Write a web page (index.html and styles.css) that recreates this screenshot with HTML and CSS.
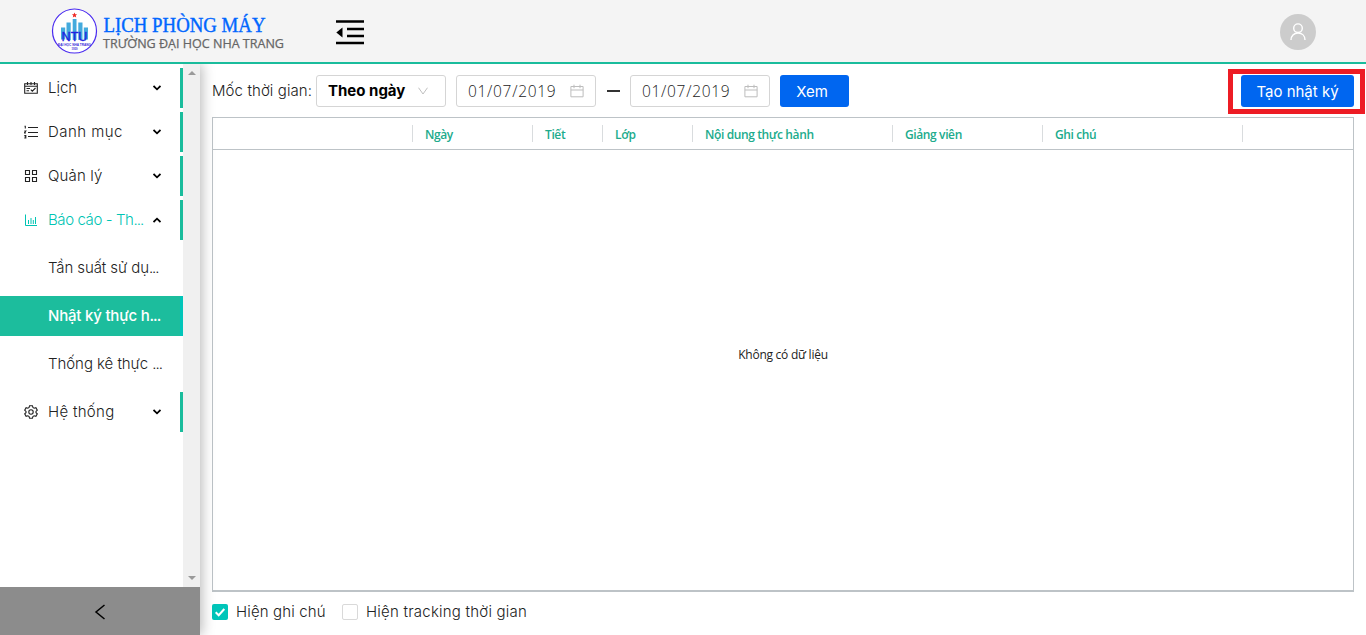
FILE: index.html
```html
<!DOCTYPE html>
<html lang="vi">
<head>
<meta charset="utf-8">
<title>Lịch phòng máy</title>
<link rel="stylesheet" href="styles.css">
</head>
<body>
<header class="header">
  <svg class="logo" width="240" height="52" viewBox="0 0 240 52">
    <circle cx="24.500" cy="25" r="22" fill="#fff" stroke="#4a2bf0" stroke-width="1.200"/>
    <path d="M24.500 6.500l.8 1.700 1.800.1-1.400 1.200.5 1.900-1.700-1-1.700 1 .5-1.900-1.400-1.200 1.800-.1z" fill="#ee2a24"/>
    <path d="M11 21.500h4.200v12H11zM16.500 16.500h4.200V34h-4.200zM22.700 13h3.800v21h-3.800zM28.300 16.500h4.200V34h-4.200zM33.800 21.500H38v12h-4.200z" fill="#43aadd"/>
    <text x="11.500" y="34.500" class="logo-ntu" textLength="26" lengthAdjust="spacingAndGlyphs">NTU</text>
    <text x="8" y="39.500" class="logo-tiny" textLength="33" lengthAdjust="spacingAndGlyphs">ĐẠI HỌC NHA TRANG</text>
    <text x="21.500" y="44.300" class="logo-tiny" textLength="6" lengthAdjust="spacingAndGlyphs">1959</text>
    <text x="53.500" y="25.500" class="logo-title" textLength="162" lengthAdjust="spacingAndGlyphs">LỊCH PHÒNG MÁY</text>
    <text x="53" y="41.500" class="logo-sub" textLength="181" lengthAdjust="spacingAndGlyphs">TRƯỜNG ĐẠI HỌC NHA TRANG</text>
  </svg>
  <svg class="fold" width="28" height="25" viewBox="0 0 28 25"><path d="M0 1.500h28M11 9h17M11 16h17M0 23h28" stroke="#000" stroke-width="2.400"/><path d="M6.500 7.500v10L.3 12.500z"/></svg>
  <span class="avatar"><svg width="18" height="18" viewBox="0 0 18 18" fill="none" stroke="#fff" stroke-width="1.400"><circle cx="9" cy="5.200" r="4.300"/><path d="M2 17c0-4.200 2.900-7 7-7s7 2.800 7 7"/></svg></span>
</header>
<div class="body">
  <aside class="sider">
    <div class="scroll">
      <nav class="menu">
        <div class="item"><svg class="icon" viewBox="0 0 14 14"><path d="M.7 2.700h12.600v9.600H.7zM.7 5.300h12.600M3.500 1v3M7 1v3M10.500 1v3M2.500 7.500H6M2.500 9.800H5M6.800 8.700l1.500 1.500L11.500 7"/></svg><span>Lịch</span><svg class="caret" viewBox="0 0 8 6"><path d="M.5 1L4 4.300 7.500 1"/></svg></div>
        <div class="item"><svg class="icon" viewBox="0 0 14 14"><path d="M4 2.500h10M4 7.500h10M4 11.500h10M.5 1.200h.8v2.300M.3 6h1.500L.3 8h1.600M.3 10.500h1.500v2.500H.3M.6 11.700h1"/></svg><span class="t-danh">Danh mục</span><svg class="caret" viewBox="0 0 8 6"><path d="M.5 1L4 4.300 7.500 1"/></svg></div>
        <div class="item"><svg class="icon" viewBox="0 0 14 14"><path d="M1.500 1.500h4v4h-4zM8.500 1.500h4v4h-4zM1.500 8.500h4v4h-4zM8.500 8.500h4v4h-4z"/></svg><span class="t-quan">Quản lý</span><svg class="caret" viewBox="0 0 8 6"><path d="M.5 1L4 4.300 7.500 1"/></svg></div>
        <div class="item open"><svg class="icon" viewBox="0 0 14 14"><path d="M1.500 1.500v11H13M4.500 7v4M7 5v6M9.300 7v4M11.500 4v7"/></svg><span class="t-bao">Báo cáo - Th<span class="dots">...</span></span><svg class="caret" viewBox="0 0 8 6"><path d="M.5 5L4 1.700 7.500 5"/></svg></div>
        <div class="submenu">
          <div class="sub"><span class="t-tan">Tần suất sử dụ<span class="dots">...</span></span></div>
          <div class="sub active"><span class="t-nhat">Nhật ký thực h<span class="dots">...</span></span></div>
          <div class="sub"><span class="t-thong">Thống kê thực <span class="dots">...</span></span></div>
        </div>
        <div class="item"><svg class="icon" viewBox="0 0 14 14"><circle cx="7" cy="7" r="2.200"/><path d="M5.600.7h2.800l.5 1.800 1.200.7 1.800-.5 1.400 2.400L12 6.400v1.300l1.300 1.200-1.400 2.400-1.800-.5-1.200.7-.5 1.800H5.600l-.5-1.800-1.200-.7-1.800.5L.7 8.900 2 7.700V6.400L.7 5.100l1.400-2.400 1.800.5 1.200-.7z"/></svg><span class="t-he">Hệ thống</span><svg class="caret" viewBox="0 0 8 6"><path d="M.5 1L4 4.300 7.500 1"/></svg></div>
      </nav>
      <div class="scrollbar"><i class="up"></i><i class="down"></i></div>
    </div>
    <div class="trigger"><svg width="12" height="16" viewBox="0 0 12 16"><path d="M10.500 1L2 8l8.500 7" fill="none" stroke="#000" stroke-width="1.500"/></svg></div>
  </aside>
  <main class="main">
    <div class="toolbar">
      <span class="label">Mốc thời gian:</span>
      <div class="box select"><b>Theo ngày</b><svg width="10" height="8" viewBox="0 0 10 8"><path d="M.5.700L5 7 9.500.700" fill="none" stroke="#bfbfbf"/></svg></div>
      <div class="box date"><span>01/07/2019</span><svg class="cal" viewBox="0 0 14 14"><path d="M.9 2.500h12.200v10.300H.9zM.9 6h12.200M4 .7v3.500M10 .7v3.500"/></svg></div>
      <i class="dash"></i>
      <div class="box date"><span>01/07/2019</span><svg class="cal" viewBox="0 0 14 14"><path d="M.9 2.500h12.200v10.300H.9zM.9 6h12.200M4 .7v3.500M10 .7v3.500"/></svg></div>
      <button class="btn xem">Xem</button>
      <div class="highlight"><button class="btn create">Tạo nhật ký</button></div>
    </div>
    <section class="grid">
      <div class="head">
        <span></span><span>Ngày</span><span>Tiết</span><span>Lớp</span><span>Nội dung thực hành</span><span>Giảng viên</span><span>Ghi chú</span><span></span>
      </div>
      <div class="empty">Không có dữ liệu</div>
    </section>
    <div class="options">
      <i class="check on"><svg width="16" height="16" viewBox="0 0 16 16"><path d="M3.700 8.200l3 3L12.300 5" fill="none" stroke="#fff" stroke-width="2"/></svg></i><span class="opt-note">Hiện ghi chú</span>
      <i class="check"></i><span class="opt-track">Hiện tracking thời gian</span>
    </div>
  </main>
</div>
</body>
</html>
```
FILE: styles.css
```css
* { box-sizing: border-box; }
body { margin: 0; height: 635px; overflow: hidden; display: flex; flex-direction: column; background: #fff; color: #222; font: 300 15px/20px Inter, "Open Sans", sans-serif; white-space: nowrap; }
.header { height: 64px; flex: none; display: flex; align-items: center; padding: 0 50px; background: #f4f4f4; border-bottom: 2px solid #1abc9c; }
.logo { margin-top: 2px; }
.logo-ntu { font: 400 12px "Liberation Sans", sans-serif; fill: #2121e0; stroke: #2121e0; stroke-width: .3px; }
.logo-tiny { font: 700 3.200px "Liberation Sans", sans-serif; fill: #3a2bd8; }
.logo-title { font: 400 20px "Liberation Serif", serif; fill: #06f; stroke: #06f; stroke-width: .4px; }
.logo-sub { font: 400 12.500px "Open Sans", sans-serif; fill: #666; stroke: #666; stroke-width: .25px; }
.fold { margin-left: 46px; margin-top: 2px; }
.avatar { width: 36px; height: 36px; margin-left: auto; margin-top: 2px; border-radius: 50%; background: #ccc; display: flex; align-items: center; justify-content: center; }
.body { flex: 1; display: flex; min-height: 0; }
.sider { width: 200px; flex: none; display: flex; flex-direction: column; box-shadow: 2px 0 12px rgba(0,0,0,.28); clip-path: inset(0 -20px 0 0); }
.scroll { flex: 1; display: flex; background: #fff; }
.menu { width: 183px; padding-top: 4px; }
.item { height: 40px; margin-bottom: 4px; padding: 0 21px 0 24px; display: flex; align-items: center; border-right: 3px solid #1abc9c; }
.item.open { color: #00c4b3; margin-bottom: 8px; }
.icon { width: 14px; height: 14px; margin-right: 10px; flex: none; fill: none; stroke: #222; stroke-width: 1.100; }
.open .icon { stroke: #00c4b3; stroke-width: 1; }
.caret { width: 8px; height: 6px; margin-left: auto; margin-right: -2px; fill: none; stroke: #000; stroke-width: 1.800; }
.dots { letter-spacing: -1px; }
.t-danh { letter-spacing: .45px; }
.t-quan { letter-spacing: .15px; }
.t-bao { letter-spacing: -.4px; }
.t-tan { letter-spacing: -.1px; }
.t-nhat { letter-spacing: -.2px; }
.t-thong { letter-spacing: -.05px; }
.t-he { letter-spacing: .3px; }
.submenu { display: flex; flex-direction: column; gap: 8px; margin-bottom: 8px; }
.sub { height: 40px; padding-left: 48px; display: flex; align-items: center; }
.active { background: #1cbd9d; color: #fff; border-right: 3px solid #00c5b9; font-weight: 500; }
.scrollbar { width: 17px; padding: 7px 0; display: flex; flex-direction: column; align-items: center; justify-content: space-between; background: #f0f0f0; }
.up, .down { border: 4px solid transparent; }
.up { border-top: 0; border-bottom-color: #9a9a9a; }
.down { border-bottom: 0; border-top-color: #9a9a9a; }
.trigger { height: 48px; padding: 2px 1px 0 0; background: #8c8c8c; display: flex; align-items: center; justify-content: center; }
.main { flex: 1; min-width: 0; padding: 4px 1px 0 12px; display: flex; flex-direction: column; }
.toolbar { height: 49px; display: flex; align-items: center; padding-bottom: 3px; }
.label { width: 104px; letter-spacing: .1px; }
.box { height: 32px; margin-right: 10px; padding: 0 11px; border: 1px solid #d5d5d5; border-radius: 3px; display: flex; align-items: center; justify-content: space-between; }
.select { width: 130px; padding-right: 17px; color: #000; }
.select b { font-weight: 700; letter-spacing: 0; }
.date { width: 140px; font: 300 15.500px "Open Sans", sans-serif; letter-spacing: .7px; }
.cal { width: 14px; height: 14px; fill: none; stroke: #bdbdbd; }
.dash { width: 13px; height: 1.500px; background: #333; margin: 0 10px 0 1px; }
.btn { height: 32px; padding: 0; border: 0; border-radius: 3px; background: #0066f0; color: #fff; font: 400 15px Inter, sans-serif; }
.xem { width: 69px; padding-right: 5px; }
.highlight { width: 137px; height: 45px; flex: none; margin-left: auto; display: flex; align-items: center; padding-left: 8px; border: 5px solid #ed1c24; }
.create { width: 113px; }
.grid { width: 1142px; height: 475px; display: flex; flex-direction: column; border: 1px solid #bdc3c7; border-bottom-width: 2px; }
.head { height: 32px; flex: none; display: grid; grid-template-columns: 199px 120px 70px 90px 200px 150px 200px 1fr; align-items: center; border-bottom: 1px solid #bdc3c7; color: #20ab8c; font: 600 12px/19px "Open Sans", sans-serif; letter-spacing: -.38px; }
.head span { height: 17px; padding-left: 12px; border-left: 1px solid #d9dcde; }
.head span:first-child { border: 0; }
.empty { flex: 1; display: flex; align-items: center; justify-content: center; padding-bottom: 31px; font: 400 12px "Open Sans", sans-serif; letter-spacing: -.25px; }
.options { flex: 1; display: flex; align-items: center; padding-bottom: 3px; }
.check { width: 16px; height: 16px; margin-right: 8px; border: 1px solid #d9d9d9; border-radius: 2px; }
.check.on { border: 0; background: #00c5b9; }
.check svg { display: block; }
.opt-note { width: 106px; letter-spacing: .15px; }
.opt-track { letter-spacing: .23px; }
```
